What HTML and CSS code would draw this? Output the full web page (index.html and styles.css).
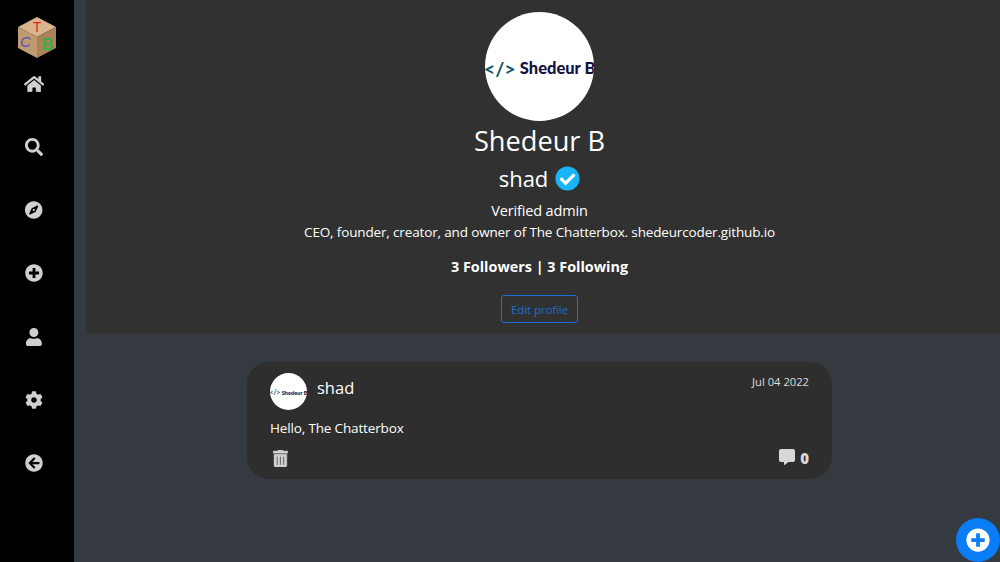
FILE: index.html
```html
<!DOCTYPE html>
<html lang="en">

<head>
    <meta charset="UTF-8">
    <meta name="viewport" content="width=device-width, initial-scale=1.0">
    <title>Shedeur B | The Chatterbox</title>
    <link rel="stylesheet" href="styles.css">
</head>

<body>
    <!-- Sidebar -->
    <nav class="sidebar">
        <svg class="logo" viewBox="0 0 38 41">
            <polygon points="19,0 38,10 19,20 0,10" fill="#d9b48c"/>
            <polygon points="0,10 19,20 19,41 0,31" fill="#c09a70"/>
            <polygon points="38,10 19,20 19,41 38,31" fill="#a98459"/>
            <text x="19" y="15" class="logo-t">T</text>
            <text x="7.5" y="30" class="logo-c">C</text>
            <text x="29.5" y="33" class="logo-b">B</text>
        </svg>
        <div class="nav-icons">
            <a href="#"><svg viewBox="0 0 576 512"><path d="M280.37 148.26L96 300.11V464a16 16 0 0 0 16 16l112.06-.29a16 16 0 0 0 15.92-16V368a16 16 0 0 1 16-16h64a16 16 0 0 1 16 16v95.64a16 16 0 0 0 16 16.05L464 480a16 16 0 0 0 16-16V300L295.67 148.26a12.19 12.19 0 0 0-15.3 0zM571.6 251.47L488 182.56V44.05a12 12 0 0 0-12-12h-56a12 12 0 0 0-12 12v72.61L318.47 43a48 48 0 0 0-61 0L4.34 251.47a12 12 0 0 0-1.6 16.9l25.5 31A12 12 0 0 0 45.15 301l235.22-193.74a12.19 12.19 0 0 1 15.3 0L530.9 301a12 12 0 0 0 16.9-1.6l25.5-31a12 12 0 0 0-1.7-16.93z"/></svg></a>
            <a href="#"><svg viewBox="0 0 512 512"><path d="M505 442.7L405.3 343c-4.5-4.5-10.6-7-17-7H372c27.6-35.3 44-79.7 44-128C416 93.1 322.9 0 208 0S0 93.1 0 208s93.1 208 208 208c48.3 0 92.7-16.4 128-44v16.3c0 6.4 2.5 12.5 7 17l99.7 99.7c9.4 9.4 24.6 9.4 33.9 0l28.3-28.3c9.4-9.4 9.4-24.6.1-34zM208 336c-70.7 0-128-57.2-128-128 0-70.7 57.2-128 128-128 70.7 0 128 57.2 128 128 0 70.7-57.2 128-128 128z"/></svg></a>
            <a href="#"><svg viewBox="0 0 496 512"><path d="M225.38 233.37c-12.5 12.5-12.5 32.76 0 45.25 12.49 12.5 32.76 12.5 45.25 0 12.5-12.5 12.5-32.76 0-45.25-12.5-12.49-32.76-12.49-45.25 0zM248 8C111.03 8 0 119.03 0 256s111.03 248 248 248 248-111.03 248-248S384.97 8 248 8zm126.14 148.05L308.17 300.4a31.938 31.938 0 0 1-15.77 15.77l-144.34 65.97c-16.65 7.61-33.81-9.55-26.2-26.2l65.98-144.35a31.938 31.938 0 0 1 15.77-15.77l144.34-65.97c16.65-7.6 33.8 9.55 26.19 26.2z"/></svg></a>
            <a href="#"><svg viewBox="0 0 512 512"><path d="M256 8C119 8 8 119 8 256s111 248 248 248 248-111 248-248S393 8 256 8zm144 276c0 6.6-5.4 12-12 12h-92v92c0 6.6-5.4 12-12 12h-56c-6.6 0-12-5.4-12-12v-92h-92c-6.6 0-12-5.4-12-12v-56c0-6.6 5.4-12 12-12h92v-92c0-6.6 5.4-12 12-12h56c6.6 0 12 5.4 12 12v92h92c6.6 0 12 5.4 12 12v56z"/></svg></a>
            <a href="#"><svg viewBox="0 0 448 512"><path d="M224 256c70.7 0 128-57.3 128-128S294.7 0 224 0 96 57.3 96 128s57.3 128 128 128zm89.6 32h-16.7c-22.2 10.2-46.9 16-72.9 16s-50.6-5.8-72.9-16h-16.7C60.2 288 0 348.2 0 422.4V464c0 26.5 21.5 48 48 48h352c26.5 0 48-21.5 48-48v-41.6c0-74.2-60.2-134.4-134.4-134.4z"/></svg></a>
            <a href="#"><svg viewBox="0 0 512 512"><path d="M487.4 315.7l-42.6-24.6c4.3-23.2 4.3-47 0-70.2l42.6-24.6c4.9-2.8 7.1-8.6 5.5-14-11.1-35.6-30-67.8-54.7-94.6-3.8-4.1-10-5.1-14.8-2.3L380.8 110c-17.9-15.4-38.5-27.3-60.8-35.1V25.8c0-5.6-3.9-10.5-9.4-11.7-36.7-8.2-74.3-7.8-109.2 0-5.5 1.2-9.4 6.1-9.4 11.7V75c-22.2 7.9-42.8 19.8-60.8 35.1L88.7 85.5c-4.9-2.8-11-1.9-14.8 2.3-24.7 26.7-43.6 58.9-54.7 94.6-1.7 5.4.6 11.2 5.5 14L67.3 221c-4.3 23.2-4.3 47 0 70.2l-42.6 24.6c-4.9 2.8-7.1 8.6-5.5 14 11.1 35.6 30 67.8 54.7 94.6 3.8 4.1 10 5.1 14.8 2.3l42.6-24.6c17.9 15.4 38.5 27.3 60.8 35.1v49.2c0 5.6 3.9 10.5 9.4 11.7 36.7 8.2 74.3 7.8 109.2 0 5.5-1.2 9.4-6.1 9.4-11.7v-49.2c22.2-7.9 42.8-19.8 60.8-35.1l42.6 24.6c4.9 2.8 11 1.9 14.8-2.3 24.7-26.7 43.6-58.9 54.7-94.6 1.5-5.5-.7-11.3-5.6-14.1zM256 336c-44.1 0-80-35.9-80-80s35.9-80 80-80 80 35.9 80 80-35.9 80-80 80z"/></svg></a>
            <a href="#"><svg viewBox="0 0 512 512"><path d="M256 504C119 504 8 393 8 256S119 8 256 8s248 111 248 248-111 248-248 248zm28.9-143.6L209.4 288H392c13.3 0 24-10.7 24-24v-16c0-13.3-10.7-24-24-24H209.4l75.5-72.4c9.7-9.3 9.9-24.8.4-34.3l-11-10.9c-9.4-9.4-24.6-9.4-33.9 0L107.7 239c-9.4 9.4-9.4 24.6 0 33.9l132.7 132.7c9.4 9.4 24.6 9.4 33.9 0l11-10.9c9.5-9.5 9.3-25-.4-34.3z"/></svg></a>
        </div>
    </nav>

    <main class="main">
        <!-- Profile header -->
        <section class="profile">
            <div class="avatar avatar-large"><span>&lt;/&gt;</span> Shedeur B</div>
            <h1 class="display-name">Shedeur B</h1>
            <h2 class="username">shad
                <span class="verified">
                    <svg viewBox="0 0 512 512"><path d="M504 256c0 136.967-111.033 248-248 248S8 392.967 8 256 119.033 8 256 8s248 111.033 248 248zM227.314 387.314l184-184c6.248-6.248 6.248-16.379 0-22.627l-22.627-22.627c-6.248-6.249-16.379-6.249-22.628 0L216 308.118l-70.059-70.059c-6.248-6.248-16.379-6.248-22.628 0l-22.627 22.627c-6.248 6.248-6.248 16.379 0 22.627l104 104c6.249 6.249 16.379 6.249 22.628.001z"/></svg>
                </span>
            </h2>
            <p class="role">Verified admin</p>
            <p class="bio">CEO, founder, creator, and owner of The Chatterbox. shedeurcoder.github.io</p>
            <p class="follows">3 Followers | 3 Following</p>
            <a href="#" class="edit-btn">Edit profile</a>
        </section>

        <!-- Posts -->
        <section class="post">
            <div class="post-head">
                <div class="avatar avatar-small"><span>&lt;/&gt;</span> Shedeur B</div>
                <span class="post-user">shad</span>
                <span class="post-date">Jul 04 2022</span>
            </div>
            <p class="post-text">Hello, The Chatterbox</p>
            <div class="post-foot">
                <svg class="trash" viewBox="0 0 448 512"><path d="M32 464a48 48 0 0 0 48 48h288a48 48 0 0 0 48-48V128H32zm272-256a16 16 0 0 1 32 0v224a16 16 0 0 1-32 0zm-96 0a16 16 0 0 1 32 0v224a16 16 0 0 1-32 0zm-96 0a16 16 0 0 1 32 0v224a16 16 0 0 1-32 0zM432 32H312l-9.4-18.7A24 24 0 0 0 281.1 0H166.8a23.72 23.72 0 0 0-21.4 13.3L136 32H16A16 16 0 0 0 0 48v32a16 16 0 0 0 16 16h416a16 16 0 0 0 16-16V48a16 16 0 0 0-16-16z"/></svg>
                <span class="comments">
                    <svg viewBox="0 0 512 512"><path d="M448 0H64C28.7 0 0 28.7 0 64v288c0 35.3 28.7 64 64 64h96v84c0 9.8 11.2 15.5 19.1 9.7L304 416h144c35.3 0 64-28.7 64-64V64c0-35.3-28.7-64-64-64z"/></svg>
                    0
                </span>
            </div>
        </section>
    </main>

    <!-- New post button -->
    <a href="#" class="fab">
        <svg viewBox="0 0 512 512"><path d="M256 8C119 8 8 119 8 256s111 248 248 248 248-111 248-248S393 8 256 8zm144 276c0 6.6-5.4 12-12 12h-92v92c0 6.6-5.4 12-12 12h-56c-6.6 0-12-5.4-12-12v-92h-92c-6.6 0-12-5.4-12-12v-56c0-6.6 5.4-12 12-12h92v-92c0-6.6 5.4-12 12-12h56c6.6 0 12 5.4 12 12v92h92c6.6 0 12 5.4 12 12v56z"/></svg>
    </a>
</body>

</html>
```
FILE: styles.css
```css
html,
body {
    height: 100%;
}

body {
    font-family: "Open Sans", "Noto Sans", sans-serif;
    margin: 0;
    padding: 0;
    background-color: #343a40;
    color: white;
    display: flex;
    overflow: hidden;
}

.sidebar {
    width: 74px;
    flex-shrink: 0;
    background-color: black;
    padding-top: 17px;
    box-sizing: border-box;
}

.logo {
    width: 38px;
    height: 41px;
    display: block;
    margin-left: 18px;
}

.logo text {
    font-family: "Liberation Sans", sans-serif;
    text-anchor: middle;
}

.logo-t {
    fill: #e0262a;
    font-size: 14px;
}

.logo-c {
    fill: #5a4bc0;
    font-size: 15px;
    font-style: italic;
}

.logo-b {
    fill: #35b04a;
    font-size: 16px;
    font-weight: bold;
}

.nav-icons {
    width: 68px;
    display: flex;
    flex-direction: column;
    align-items: center;
    gap: 45.17px;
    margin-top: 17px;
}

.nav-icons a {
    display: block;
    height: 18px;
}

.nav-icons svg {
    display: block;
    height: 18px;
    fill: #d0d0d0;
}

.main {
    flex: 1;
    min-width: 0;
    padding-left: 12px;
}

.profile {
    background-color: #313131;
    height: 334px;
    box-sizing: border-box;
    padding: 12px 7px 0 0;
    text-align: center;
}

.avatar {
    background-color: white;
    border-radius: 50%;
    overflow: hidden;
    display: flex;
    align-items: center;
    justify-content: center;
    white-space: nowrap;
    font-family: "Lato", sans-serif;
    font-weight: 900;
    color: #14123f;
}

.avatar span {
    color: #0f5c6e;
    font-weight: 700;
    font-size: 1.2em;
    margin-right: 0.2em;
}

.avatar-large {
    width: 109px;
    height: 109px;
    box-sizing: border-box;
    padding-top: 3px;
    margin: 0 auto;
    font-size: 16.5px;
}

.avatar-small {
    width: 37px;
    height: 37px;
    box-sizing: border-box;
    padding-top: 1px;
    font-size: 5.6px;
    flex-shrink: 0;
}

.display-name {
    font-size: 27.2px;
    font-weight: 400;
    line-height: 38px;
    margin: 1px 0 0;
}

.username {
    font-size: 22px;
    font-weight: 400;
    line-height: 30px;
    margin: 3px 0 0;
    display: flex;
    align-items: center;
    justify-content: center;
    gap: 7px;
}

.verified {
    display: block;
    width: 25px;
    height: 25px;
    border-radius: 50%;
    background: radial-gradient(circle, white 60%, transparent 62%);
}

.verified svg {
    display: block;
    fill: #18b4f5;
}

.role {
    font-size: 14.5px;
    letter-spacing: -0.15px;
    line-height: 20px;
    margin: 8px 0 0;
}

.bio {
    font-size: 13.5px;
    letter-spacing: -0.15px;
    line-height: 22px;
    margin: 0;
}

.follows {
    font-size: 14.4px;
    font-weight: bold;
    line-height: 22px;
    margin: 13px 0 0;
}

.edit-btn {
    display: inline-block;
    box-sizing: border-box;
    margin-top: 17px;
    padding: 0 8.5px;
    height: 28px;
    line-height: 27px;
    font-size: 11.5px;
    letter-spacing: -0.1px;
    color: #1a6fd0;
    text-decoration: none;
    border: 1px solid #1a6fd0;
    border-radius: 3px;
}

.post {
    width: 585px;
    height: 117px;
    box-sizing: border-box;
    margin: 28px 0 0 161px;
    padding: 11px 23px 0;
    background-color: #2e2e2e;
    border-radius: 22px;
}

.post-head {
    display: flex;
    align-items: flex-start;
}

.post-user {
    font-size: 16.5px;
    line-height: 30px;
    margin-left: 10px;
}

.post-date {
    margin-left: auto;
    font-size: 11.2px;
    line-height: 18px;
    color: #ddd;
}

.post-text {
    font-size: 13.5px;
    letter-spacing: -0.15px;
    line-height: 20px;
    margin: 8px 0 0;
}

.post-foot {
    display: flex;
    align-items: center;
    justify-content: space-between;
    margin-top: 10px;
    padding-left: 3px;
}

.trash {
    display: block;
    height: 17px;
    fill: #cfcfcf;
    stroke: #cfcfcf;
    stroke-width: 14;
}

.comments {
    display: flex;
    align-items: center;
    gap: 5px;
    font-size: 15px;
    font-weight: 800;
    color: #d8d8d8;
}

.comments svg {
    display: block;
    height: 16px;
    margin-top: -2px;
    fill: #d8d8d8;
}

.fab {
    position: fixed;
    right: 0;
    bottom: 0;
    width: 44px;
    height: 44px;
    border-radius: 50%;
    background-color: #0a7cf5;
    display: flex;
    align-items: center;
    justify-content: center;
}

.fab svg {
    display: block;
    width: 24px;
    height: 24px;
    fill: white;
}
```
